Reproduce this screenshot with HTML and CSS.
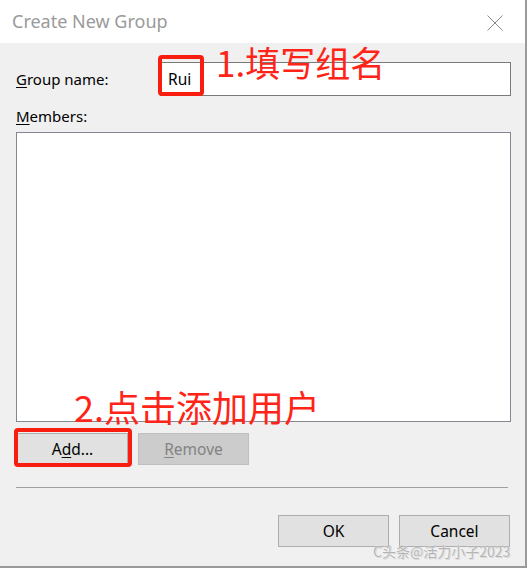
FILE: index.html
```html
<!DOCTYPE html>
<html>
<head>
<meta charset="utf-8">
<link rel="stylesheet" href="styles.css">
</head>
<body>
<div class="window">
  <div class="titlebar">
    <span class="title">Create New Group</span>
    <svg class="close" width="16" height="16" viewBox="0 0 16 16"><path d="M0.5 0.5 L15.5 15.5 M15.5 0.5 L0.5 15.5" stroke="#8a8a8a" stroke-width="1" fill="none"/></svg>
  </div>
  <div class="content">
    <div class="name-row">
      <span class="label"><u>G</u>roup name:</span>
      <div class="input">Rui</div>
    </div>
    <div class="members-label"><u>M</u>embers:</div>
    <div class="listbox"></div>
    <div class="btn-row">
      <div class="btn btn-add">A<u>d</u>d...</div>
      <div class="btn btn-disabled"><u>R</u>emove</div>
    </div>
    <div class="sep"></div>
    <div class="footer">
      <div class="btn">OK</div>
      <div class="btn">Cancel</div>
    </div>
  </div>
  <div class="mark mark-name"></div>
  <div class="note note-1">1.填写组名</div>
  <div class="mark mark-add"></div>
  <div class="note note-2">2.点击添加用户</div>
  <div class="watermark">C头条@活力小子2023</div>
</div>
</body>
</html>
```

FILE: styles.css
```css
html, body {
  margin: 0;
  padding: 0;
  background: #ffffff;
}
.window {
  position: relative;
  width: 525px;
  height: 566px;
  border-right: 2px solid #9a9a9a;
  border-bottom: 2px solid #9a9a9a;
  background: #f0f0f0;
  font-family: "Noto Sans", "Open Sans", sans-serif;
  color: #000;
  overflow: hidden;
}
.titlebar {
  height: 43px;
  background: #ffffff;
  display: flex;
  align-items: center;
  justify-content: space-between;
  padding: 0 22px 0 12px;
}
.title {
  font-size: 18px;
  color: #9a9a9a;
  line-height: 24px;
  margin-top: -1px;
}
.close {
  display: block;
  margin-top: 2px;
}
.content {
  padding: 0 14px 0 16px;
}
.name-row {
  display: flex;
  align-items: center;
  margin-top: 19px;
  height: 34px;
}
.label {
  width: 144px;
  font-size: 15px;
  line-height: 20px;
}
u {
  text-decoration-thickness: 1px;
  text-underline-offset: 2px;
}
.input {
  flex: 1;
  height: 32px;
  border: 1px solid #7a7a7a;
  background: #fff;
  font-size: 15.5px;
  line-height: 32px;
  padding-left: 7px;
}
.members-label {
  margin-top: 10px;
  font-size: 15px;
  line-height: 20px;
}
.listbox {
  margin-top: 6px;
  height: 288px;
  border: 1px solid #828790;
  background: #fff;
}
.btn-row {
  display: flex;
  gap: 10px;
  margin-top: 11px;
  padding-left: 1px;
}
.btn {
  width: 109px;
  height: 30px;
  border: 1px solid #adadad;
  background: #e1e1e1;
  font-size: 15.5px;
  line-height: 30px;
  text-align: center;
}
.btn-disabled {
  background: #cccccc;
  border-color: #bfbfbf;
  color: #838383;
}
.sep {
  margin-top: 22px;
  width: 492px;
  height: 1px;
  background: #a0a0a0;
}
.footer {
  display: flex;
  justify-content: flex-end;
  gap: 10px;
  margin-top: 27px;
  padding-right: 1px;
}
.mark {
  position: absolute;
  border: 4px solid #f81d0e;
  border-radius: 4px;
  box-sizing: border-box;
}
.mark-name {
  left: 158px;
  top: 55px;
  width: 46px;
  height: 41px;
}
.mark-add {
  left: 14px;
  top: 428px;
  width: 118px;
  height: 39px;
}
.note {
  position: absolute;
  font-family: "Noto Sans CJK SC", sans-serif;
  font-size: 35px;
  line-height: 40px;
  color: #ff2418;
  white-space: nowrap;
}
.note-1 {
  left: 216px;
  top: 42px;
}
.note-2 {
  left: 74px;
  top: 386px;
  font-size: 36px;
}
.watermark {
  position: absolute;
  left: 373px;
  top: 541px;
  font-family: "Noto Sans CJK SC", sans-serif;
  font-size: 14px;
  line-height: 20px;
  color: #b4b4b4;
  text-shadow: 0 0 1px #ffffff, 1px 1px 0 #d8d8d8;
  white-space: nowrap;
}
```
